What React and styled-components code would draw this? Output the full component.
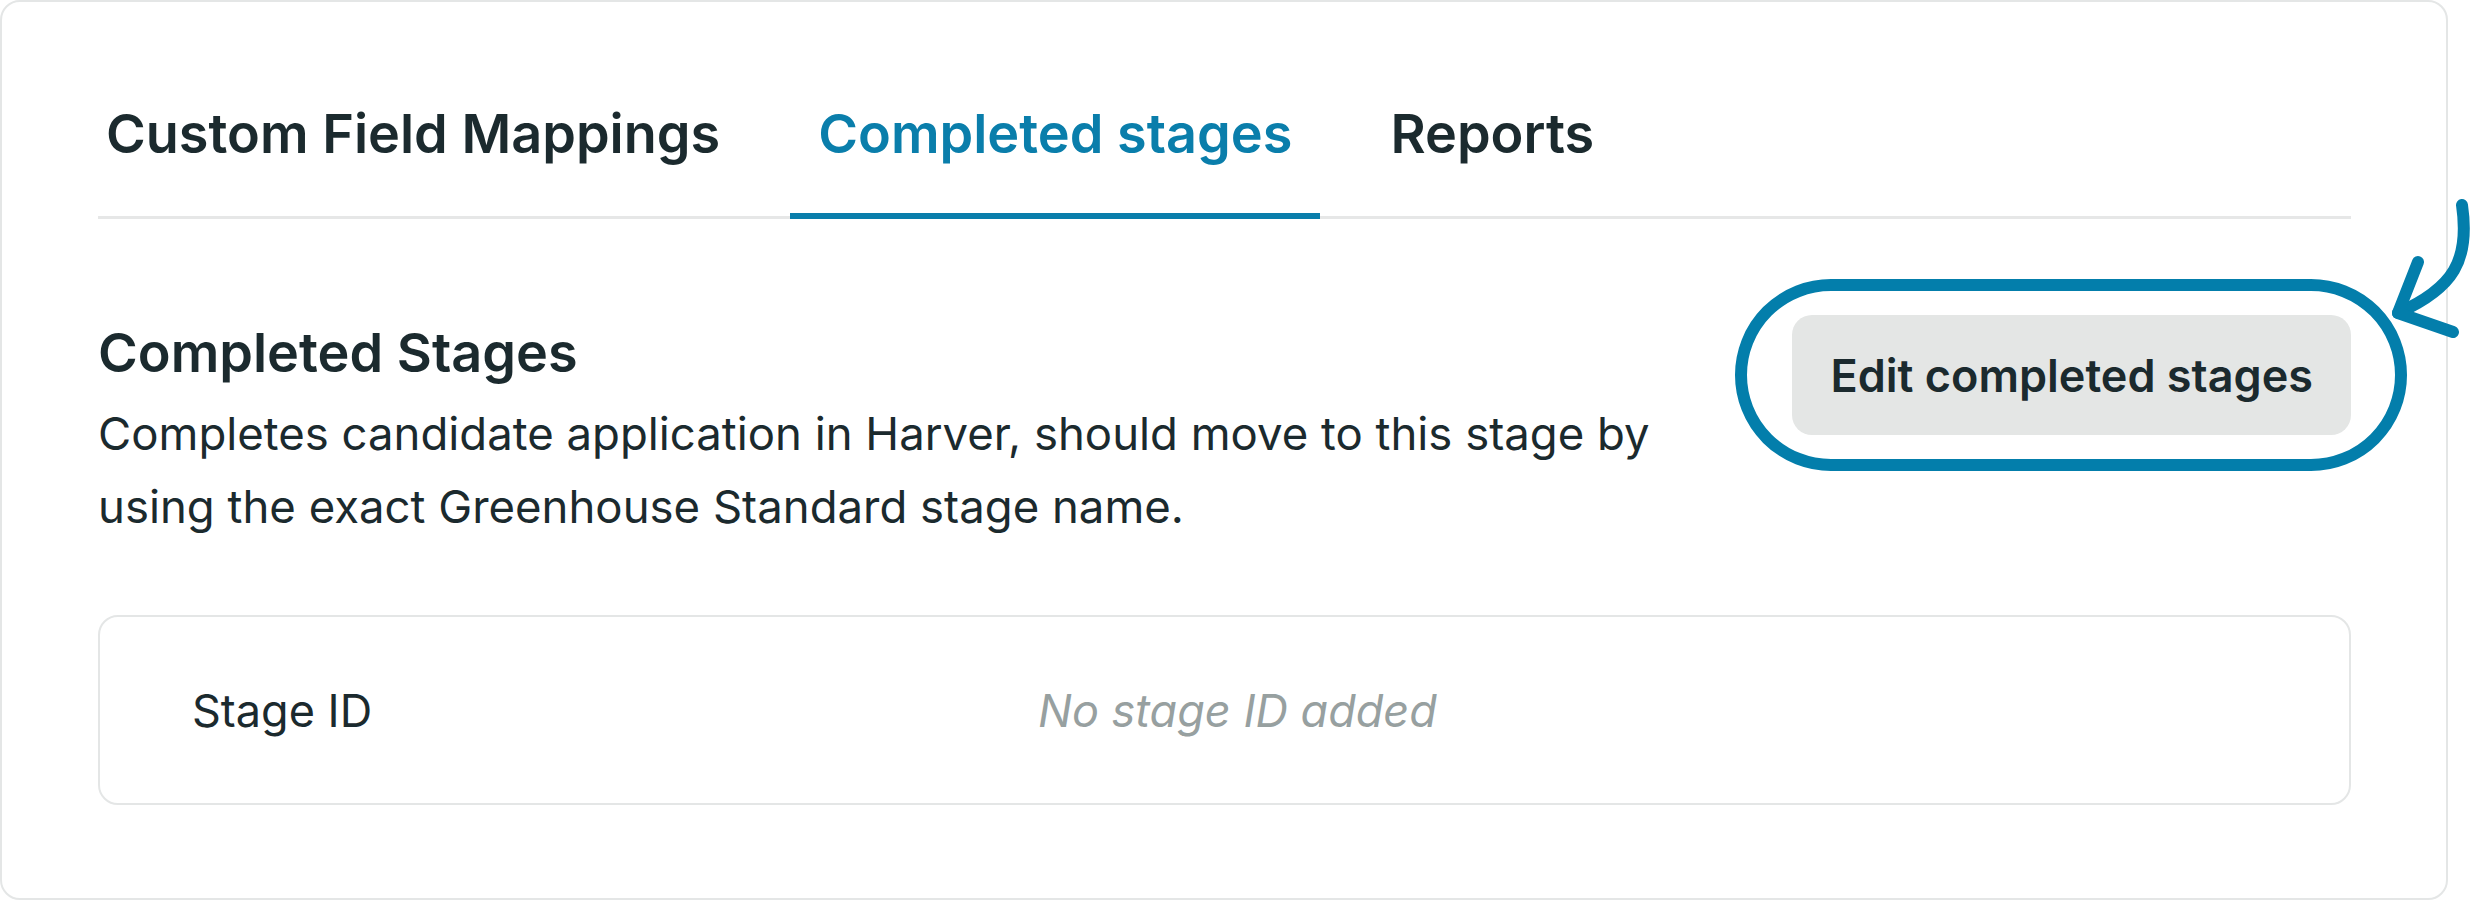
import React, { useState } from 'react';
import styled, { createGlobalStyle } from 'styled-components';

const GlobalStyle = createGlobalStyle`
  * {
    box-sizing: border-box;
  }
  body {
    margin: 0;
    background: #ffffff;
    font-family: Inter, "Noto Sans", sans-serif;
    color: #1b2a2e;
  }
`;

const Card = styled.div`
  width: 2448px;
  border: 2px solid #e4e6e6;
  border-radius: 20px;
  padding: 99px 95px 93px 96px;
  background: #ffffff;
`;

// 탭 영역
const TabList = styled.div`
  display: flex;
  gap: 42px;
  border-bottom: 3px solid #e6e7e7;
`;

const Tab = styled.button`
  margin: 0 0 -3px;
  padding: 0 28px 47px;
  border: none;
  border-bottom: 6px solid ${({ $active }) => ($active ? '#0a7eab' : 'transparent')};
  background: none;
  font-family: inherit;
  font-size: 54px;
  line-height: 65px;
  font-weight: 600;
  color: ${({ $active }) => ($active ? '#0a7eab' : '#1b2a2e')};
  cursor: pointer;

  &:first-child {
    padding-left: 8px;
  }
`;

// 본문 헤더
const SectionHead = styled.div`
  display: flex;
  justify-content: space-between;
  align-items: flex-start;
  margin-top: 101px;
`;

const Intro = styled.div`
  width: 1640px;
`;

const Title = styled.h2`
  margin: 0;
  font-size: 54px;
  line-height: 65px;
  font-weight: 600;
`;

const Description = styled.p`
  margin: 12px 0 0;
  font-size: 45.5px;
  line-height: 73px;
  font-weight: 400;
`;

const ButtonWrap = styled.div`
  position: relative;
  margin-top: -5px;
`;

const EditButton = styled.button`
  height: 120px;
  padding: 0 38px;
  border: none;
  border-radius: 20px;
  background: #e4e6e5;
  font-family: inherit;
  font-size: 45px;
  font-weight: 600;
  color: #1b2a2e;
  cursor: pointer;
`;

// 강조 표시 (버튼 위에 겹침)
const Highlight = styled.span`
  position: absolute;
  top: -36px;
  bottom: -36px;
  left: -57px;
  right: -56px;
  border: 12px solid #037eab;
  border-radius: 96px;
  pointer-events: none;
`;

const Arrow = styled.svg`
  position: absolute;
  right: -120px;
  top: -135px;
  overflow: visible;
  pointer-events: none;
`;

// 스테이지 박스
const StageBox = styled.div`
  display: grid;
  grid-template-columns: 846px 1fr;
  align-items: center;
  height: 190px;
  margin-top: 72px;
  padding: 0 92px;
  border: 2px solid #e4e6e6;
  border-radius: 20px;
  font-size: 45px;
`;

const StageLabel = styled.span`
  color: #1b2a2e;
`;

const StageValue = styled.span`
  font-style: italic;
  color: #97a0a0;
`;

const tabs = ['Custom Field Mappings', 'Completed stages', 'Reports'];

export default function App() {
  const [active, setActive] = useState(1);

  return (
    <>
      <GlobalStyle />
      <Card>
        <TabList>
          {tabs.map((t, i) => (
            <Tab key={t} $active={i === active} onClick={() => setActive(i)}>
              {t}
            </Tab>
          ))}
        </TabList>

        <SectionHead>
          <Intro>
            <Title>Completed Stages</Title>
            <Description>
              Completes candidate application in Harver, should move to this stage by using the
              exact Greenhouse Standard stage name.
            </Description>
          </Intro>
          <ButtonWrap>
            <EditButton>Edit completed stages</EditButton>
            <Highlight />
            <Arrow width="121" height="180" viewBox="0 0 121 180">
              <g fill="none" stroke="#037eab" strokeWidth="12" strokeLinecap="round" strokeLinejoin="round">
                <path d="M112 25 C120 80 104 108 48 133" />
                <path d="M68 82 L48 133 L103 152" />
              </g>
            </Arrow>
          </ButtonWrap>
        </SectionHead>

        <StageBox>
          <StageLabel>Stage ID</StageLabel>
          <StageValue>No stage ID added</StageValue>
        </StageBox>
      </Card>
    </>
  );
}
